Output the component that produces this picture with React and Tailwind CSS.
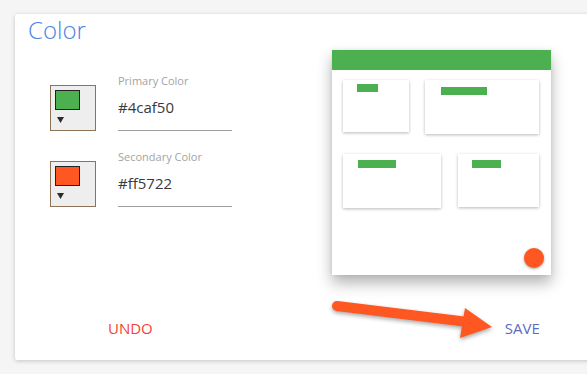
import React from "react";

const FONT = { fontFamily: '"Open Sans", "Liberation Sans", sans-serif' };

function Swatch({ color }) {
  return (
    <div className="w-[46px] h-[46px] shrink-0 border border-[#8f7357] bg-[#eeeeee] pl-[4px] pt-[4px]">
      <div className="w-[25px] h-[20px] border border-[#222]" style={{ background: color }} />
      <svg className="ml-[2px] mt-[7px]" width="7" height="6" viewBox="0 0 7 6">
        <polygon points="0,0 7,0 3.5,6" fill="#2b2b2b" />
      </svg>
    </div>
  );
}

function ColorField({ label, value, color }) {
  return (
    <div className="flex items-end">
      <Swatch color={color} />
      <div className="ml-[22px] w-[114px] border-b border-[#9e9e9e] pb-[13px]">
        <div className="text-[11px] leading-4 text-[#a3a3a3]">{label}</div>
        <div className="mt-[8px] text-[15px] leading-5 text-[#3a3a3a]">{value}</div>
      </div>
    </div>
  );
}

function MiniCard({ w, h, bar, barLeft, barTop }) {
  return (
    <div
      className="bg-white shadow-[0_1px_3px_rgba(0,0,0,0.28)] relative"
      style={{ width: w, height: h }}
    >
      <div
        className="absolute h-[8px] bg-[#4caf50]"
        style={{ width: bar, left: barLeft, top: barTop }}
      />
    </div>
  );
}

function Preview() {
  return (
    <div className="relative w-[219px] h-[225px] bg-white shadow-[0_8px_14px_rgba(0,0,0,0.3),0_0_4px_rgba(0,0,0,0.08)]">
      <div className="h-[20px] bg-[#4caf50]" />
      <div className="flex items-start pl-[11px] pt-[10px]">
        <MiniCard w={66} h={52} bar={21} barLeft={14} barTop={4} />
        <div className="ml-[16px]">
          <MiniCard w={114} h={54} bar={46} barLeft={16} barTop={7} />
        </div>
      </div>
      <div className="flex items-start pl-[11px] mt-[20px]">
        <MiniCard w={98} h={54} bar={38} barLeft={15} barTop={6} />
        <div className="ml-[17px]">
          <MiniCard w={81} h={53} bar={29} barLeft={14} barTop={6} />
        </div>
      </div>
      <div className="absolute right-[7px] bottom-[7px] w-[20px] h-[20px] rounded-full bg-[#ff5722] shadow-[0_1px_3px_rgba(0,0,0,0.35)]" />
    </div>
  );
}

export default function App() {
  return (
    <div className="w-[587px] h-[374px] overflow-hidden bg-[#f5f5f5] pt-[14px] pl-[15px]" style={FONT}>
      <div className="relative w-[600px] h-[346px] bg-white rounded-[2px] shadow-[0_1px_4px_rgba(0,0,0,0.2)]">
        <h1 className="pl-[13px] text-[24px] leading-8 font-light text-[#4d82e6]">Color</h1>

        <div className="flex">
          <div className="w-[317px] pl-[35px] pt-[27px] flex flex-col gap-[18px]">
            <ColorField label="Primary Color" value="#4caf50" color="#4caf50" />
            <ColorField label="Secondary Color" value="#ff5722" color="#ff5722" />
          </div>
          <div className="mt-[4px]">
            <Preview />
          </div>
        </div>

        <div className="flex mt-[43px] text-[15px] leading-5">
          <button className="ml-[93px] text-[#f44336]">UNDO</button>
          <button className="ml-[352px] text-[#5c6bc0]">SAVE</button>
        </div>

        {/* annotation arrow pointing at SAVE */}
        <svg
          className="absolute left-[305px] top-[276px] drop-shadow-[0_2px_2px_rgba(0,0,0,0.35)]"
          width="180"
          height="60"
          viewBox="0 0 180 60"
        >
          <line x1="17" y1="16" x2="148" y2="32" stroke="#ff5722" strokeWidth="10" strokeLinecap="round" />
          <polygon points="145,18 172,37 140,48" fill="#ff5722" />
        </svg>
      </div>
    </div>
  );
}
